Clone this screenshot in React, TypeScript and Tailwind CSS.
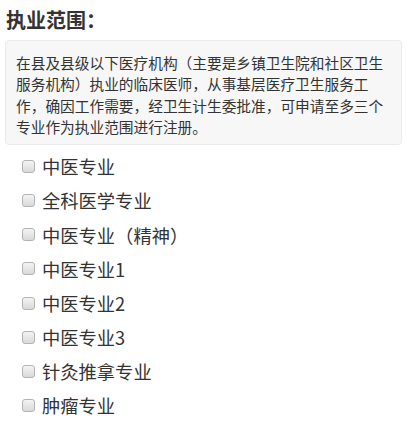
const options = [
  "中医专业",
  "全科医学专业",
  "中医专业（精神）",
  "中医专业1",
  "中医专业2",
  "中医专业3",
  "针灸推拿专业",
  "肿瘤专业",
];

export default function App() {
  return (
    <div
      className="w-[406px] h-[431px] bg-white text-[#333] px-[5px] overflow-hidden"
      style={{ fontFamily: '"Noto Sans CJK SC", "Noto Sans", sans-serif' }}
    >
      <h2 className="text-[20px] font-bold leading-[28px] pt-[6px] pl-[1px]">执业范围：</h2>
      {/* Notice */}
      <div className="mt-[6px] w-[397px] rounded-[4px] border border-[#ebebeb] bg-[#f7f7f7] pl-[10px] pr-[8px] pt-[11px] pb-[7px] text-[14.7px] leading-[21.3px] text-[#333]">
        在县及县级以下医疗机构（主要是乡镇卫生院和社区卫生服务机构）执业的临床医师，从事基层医疗卫生服务工作，确因工作需要，经卫生计生委批准，可申请至多三个专业作为执业范围进行注册。
      </div>
      <ul className="mt-[4px] pl-[17px]">
        {options.map((o) => (
          <li key={o} className="flex h-[34.2px] items-center">
            <span className="block h-[13px] w-[13px] rounded-[3px] border border-[#b3b3b3] bg-gradient-to-b from-[#f4f4f4] to-[#d9d9d9]" />
            <span className="ml-[7px] text-[18.3px] leading-none">{o}</span>
          </li>
        ))}
      </ul>
    </div>
  );
}
